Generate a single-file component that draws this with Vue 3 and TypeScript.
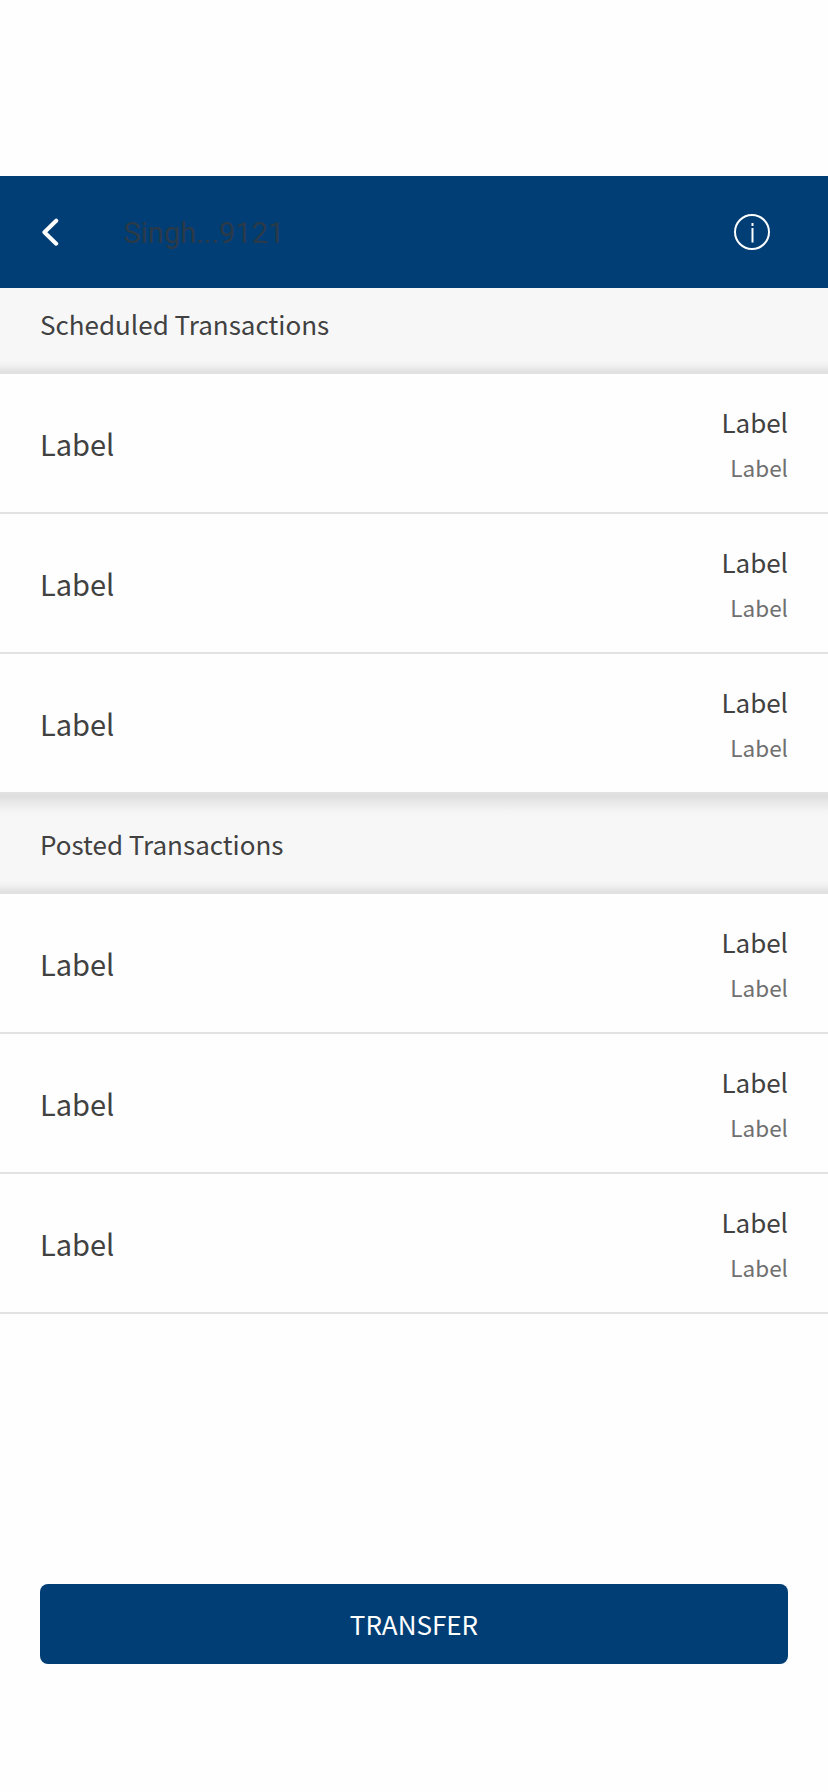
<script setup lang="ts">
interface Transaction {
  name: string
  amount: string
  balance: string
}

interface Section {
  id: string
  title: string
  items: Transaction[]
}

const makeItems = (count: number): Transaction[] =>
  Array.from({ length: count }, () => ({ name: 'Label', amount: 'Label', balance: 'Label' }))

const sections: Section[] = [
  { id: 'scheduled', title: 'Scheduled Transactions', items: makeItems(3) },
  { id: 'posted', title: 'Posted Transactions', items: makeItems(3) },
]
</script>

<template>
  <div class="screen">
    <header class="bar">
      <svg class="back" width="20" height="32" viewBox="0 0 20 32" aria-label="Back">
        <path d="M17.2 4.7L5.4 16.2L17.2 27.7" />
      </svg>
      <h1 class="account">Singh...9121</h1>
      <svg class="info" width="40" height="40" viewBox="0 0 40 40" aria-label="Information">
        <circle cx="20" cy="20" r="17" />
        <path d="M20.5 11V14M20.5 16V30.5" />
      </svg>
    </header>
    <main class="content">
      <section v-for="section in sections" :key="section.id" :class="['group', section.id]">
        <h2 class="heading">{{ section.title }}</h2>
        <ul class="list">
          <li v-for="(item, i) in section.items" :key="i" class="row">
            <span class="name">{{ item.name }}</span>
            <span class="values">
              <span class="amount">{{ item.amount }}</span>
              <span class="balance">{{ item.balance }}</span>
            </span>
          </li>
        </ul>
      </section>
    </main>
    <footer class="footer">
      <button class="transfer" type="button">TRANSFER</button>
    </footer>
  </div>
</template>

<style>
body {
  margin: 0;
  background: #fefefe;
}
</style>

<style scoped>
.screen {
  box-sizing: border-box;
  display: flex;
  flex-direction: column;
  width: 828px;
  height: 1792px;
  padding-top: 176px;
  overflow: hidden;
  background: #fefefe;
  color: #414141;
  font-family: "Noto Sans CJK SC", "Noto Sans", sans-serif;
}

.bar {
  box-sizing: border-box;
  display: flex;
  align-items: center;
  flex: none;
  height: 112px;
  padding: 0 56px 0 39px;
  background: #003e75;
}

.back {
  flex: none;
}

.back path {
  fill: none;
  stroke: #fff;
  stroke-width: 4;
  stroke-linecap: round;
  stroke-linejoin: round;
}

.account {
  margin: 0 auto 0 64.6px;
  padding-top: 2px;
  color: #2b3a48;
  font: 400 29px/40px Roboto, sans-serif;
}

.info {
  fill: none;
  stroke: #fff;
  stroke-width: 2;
}

.content {
  flex: 1;
}

.heading {
  box-sizing: border-box;
  height: 86px;
  margin: 0;
  padding: 16px 40px 0;
  background: linear-gradient(to bottom, #f7f7f7 72px, #f1f1f1 77px, #e2e2e2 83px, #e0e0e0 86px);
  font-size: 26px;
  font-weight: 400;
  line-height: 40px;
}

.posted .heading {
  height: 100px;
  padding-top: 30px;
  background: linear-gradient(to bottom, #dedede 0, #dfdfdf 2px, #e9e9e9 9px, #f3f3f3 16px, #f7f7f7 21px, #f7f7f7 86px, #f1f1f1 91px, #e2e2e2 97px, #e0e0e0 100px);
}

.list {
  margin: 0;
  padding: 0;
  list-style: none;
}

.row {
  box-sizing: border-box;
  display: flex;
  align-items: center;
  justify-content: space-between;
  height: 140px;
  padding: 0 40px;
  border-bottom: 2px solid #e2e2e2;
}

.name {
  font-size: 29px;
  line-height: 44px;
}

.values {
  display: flex;
  flex-direction: column;
  align-items: flex-end;
  gap: 6px;
  padding-top: 2px;
}

.amount {
  font-size: 26px;
  line-height: 40px;
}

.balance {
  color: #707070;
  font-size: 22.5px;
  line-height: 38px;
}

.footer {
  height: 208px;
  padding: 0 40px;
}

.transfer {
  display: block;
  width: 100%;
  height: 80px;
  padding: 0;
  border: 0;
  border-radius: 8px;
  background: #003e75;
  color: #fff;
  font: inherit;
  font-size: 26px;
  line-height: 80px;
}
</style>
